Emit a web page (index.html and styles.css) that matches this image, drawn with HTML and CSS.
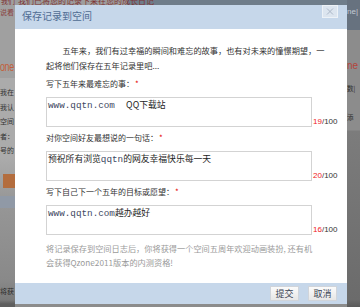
FILE: index.html
```html
<!DOCTYPE html>
<html lang="zh-CN">
<head>
<meta charset="utf-8">
<title>保存记录到空间</title>
<link rel="stylesheet" href="styles.css">
</head>
<body>
<div class="page">
  <div class="side side-left">
    <div class="lt-red1">我们</div>
    <div class="lt-red2">说看</div>
    <div class="brand-left">one</div>
    <ul class="lt-lines">
      <li>我在</li>
      <li>我认</li>
      <li>空间</li>
      <li>者：</li>
      <li>号的</li>
    </ul>
    <div class="lt-orange"></div>
    <div class="lt-blue"></div>
    <div class="lt-bottom">将获</div>
  </div>
  <div class="middle">
    <div class="mid-top"><span class="mid-red">我们已将您的记录下来在您的成长日记</span></div>
  </div>
  <div class="side side-right">
    <div class="rt-head">ne|</div>
    <div class="rt-brand">ne</div>
    <div class="rt-line rt-l1">数|</div>
    <div class="rt-line rt-l2">添</div>
  </div>
</div>

<div class="dialog">
  <div class="dlg-title">
    <span class="dlg-name">保存记录到空间</span>
    <button class="dlg-close" type="button" aria-label="关闭">
      <svg width="8" height="7" viewBox="0 0 8 7"><path d="M1 0.5L7 6.5M7 0.5L1 6.5" stroke="#aab6c6" stroke-width="1" fill="none"/></svg>
    </button>
  </div>
  <div class="dlg-body">
    <p class="intro">五年来，我们有过幸福的瞬间和难忘的故事，也有对未来的憧憬期望，一<wbr>起将他们保存在五年记录里吧...</p>
    <div class="field">
      <label class="lbl">写下五年来最难忘的事：<em>*</em></label>
      <div class="row">
        <div class="ta" role="textbox" aria-multiline="true"><span class="mono">www.qqtn.com  </span>QQ下载站</div>
        <span class="count"><b>19</b>/100</span>
      </div>
    </div>
    <div class="field">
      <label class="lbl">对你空间好友最想说的一句话：<em>*</em></label>
      <div class="row">
        <div class="ta" role="textbox" aria-multiline="true">预祝所有浏览<span class="mono">qqtn</span>的网友幸福快乐每一天</div>
        <span class="count"><b>20</b>/100</span>
      </div>
    </div>
    <div class="field">
      <label class="lbl">写下自己下一个五年的目标或愿望：<em>*</em></label>
      <div class="row">
        <div class="ta" role="textbox" aria-multiline="true"><span class="mono">www.qqtn.com</span>越办越好</div>
        <span class="count"><b>16</b>/100</span>
      </div>
    </div>
    <p class="note">将记录保存到空间日志后，你将获得一个空间五周年欢迎动画装扮, 还有机会获得Qzone2011版本的内测资格!</p>
  </div>
  <div class="dlg-foot">
    <button class="btn" type="button">提交</button>
    <button class="btn" type="button">取消</button>
  </div>
</div>
</body>
</html>
```

FILE: styles.css
```css
* { box-sizing: border-box; margin: 0; padding: 0; }
html, body { width: 360px; height: 307px; overflow: hidden; }
body {
  position: relative;
  background: #8c8c8c;
  font-family: "Noto Sans CJK SC", "Liberation Sans", sans-serif;
  color: #333;
}

/* background page (dimmed) */
.page {
  display: grid;
  grid-template-columns: 15px 1fr 13px;
  height: 307px;
}
.side { overflow: hidden; white-space: nowrap; }
.side-left {
  background: linear-gradient(to bottom, #a0a0a0 0, #a0a0a0 78px, #ababab 78px, #ababab 158px, #979797 200px, #898989 280px, #7a7a7a 300px, #5e5e5e 304px);
  display: flex;
  flex-direction: column;
}
.lt-red1 { font-size: 7px; line-height: 8px; margin-top: -3px; color: #7e3232; padding-left: 1px; }
.lt-red2 { font-size: 7px; line-height: 10px; margin-top: 2px; color: #8a4040; }
.brand-left {
  margin-top: 42px;
  height: 14px;
  font-family: "Liberation Sans", sans-serif;
  font-size: 9px;
  line-height: 10px;
  letter-spacing: -0.4px;
  color: #c2603b;
  transform: scale(1, 1.5);
  transform-origin: left top;
}
.lt-lines { list-style: none; margin-top: 12px; font-size: 7px; line-height: 14.5px; color: #333; }
.lt-orange { margin: 16px 0 0 3px; height: 14px; background: #b36d3e; }
.lt-blue { margin-top: 8px; height: 12px; background: #9099a6; }
.lt-bottom { margin-top: 78px; font-size: 7px; line-height: 10px; color: #2c2c2c; }

.middle { overflow: hidden; }
.mid-top {
  height: 5px;
  overflow: hidden;
  background: linear-gradient(to right, #9d9d9d 0, #9d9d9d 112px, #6f7d8a 112px);
}
.mid-red { display: block; font-size: 8px; line-height: 8px; margin-top: -3px; padding-left: 3px; color: #7e3232; }

.side-right {
  background: linear-gradient(to bottom, #67727f 0, #67727f 30px, #8c8c8c 30px, #8c8c8c 130px, #7c7c7c 131px, #6b6b6b 300px, #5a5a5a 307px);
}
.rt-head { height: 30px; padding-top: 7px; font-family: "Liberation Sans", sans-serif; font-size: 8px; line-height: 10px; color: #c3cbd4; }
.rt-brand { margin-top: 30px; font-family: "Liberation Sans", sans-serif; font-size: 10px; line-height: 12px; color: #b4443a; }
.rt-line { font-size: 6.5px; line-height: 10px; color: #2e2e2e; }
.rt-l1 { margin-top: 11px; }
.rt-l2 { margin-top: 19px; }

/* dialog (modal over the page) */
.dialog {
  position: absolute;
  left: 15px;
  top: 5px;
  width: 332px;
  height: 299px;
  display: flex;
  flex-direction: column;
  background: #fff;
}
.dlg-title {
  height: 24px;
  flex: none;
  display: flex;
  align-items: flex-start;
  justify-content: space-between;
  background: #c6d7ea;
  padding-left: 7px;
  padding-right: 9px;
}
.dlg-name {
  font-size: 10px;
  line-height: 22px;
  color: #506c93;
}
.dlg-close {
  width: 16px;
  height: 13px;
  border: 1px solid #edf2f7;
  background: #dce5ef;
  display: flex;
  align-items: center;
  justify-content: center;
}

.dlg-body {
  flex: 1;
  padding: 14px 16px 0 31px;
}
.intro {
  font-size: 8.2px;
  line-height: 15px;
  text-indent: 2em;
  line-break: anywhere;
}
.field { margin-top: 4px; }
.lbl {
  display: block;
  font-size: 8px;
  line-height: 14px;
}
.lbl em { font-style: normal; color: #e60000; margin-left: 1px; }
.row {
  display: flex;
  align-items: flex-end;
  margin-top: 6px;
}
.ta {
  width: 266px;
  height: 30px;
  flex: none;
  border: 1px solid #d3d3d3;
  padding: 1px 1px;
  overflow: hidden;
  font-family: "Noto Sans CJK SC", sans-serif;
  font-size: 8.8px;
  line-height: 11px;
  color: #1e1e1e;
  background: #fff;
  white-space: pre-wrap;
}
.mono {
  font-family: "Liberation Mono", monospace;
  font-size: 9.3px;
  color: #3e4862;
}
.count {
  font-family: "Liberation Sans", sans-serif;
  font-size: 8px;
  line-height: 11px;
  color: #333;
  padding-left: 1px;
}
.count b { font-weight: normal; color: #f02020; }
.note {
  width: 272px;
  margin-top: 6px;
  font-size: 8.2px;
  line-height: 14px;
  color: #9a9a9a;
  word-break: break-all;
}

.dlg-foot {
  height: 21px;
  flex: none;
  background: #c6d7ea;
  display: flex;
  justify-content: flex-end;
  align-items: center;
  gap: 9px;
  padding-right: 10px;
}
.btn {
  width: 29px;
  height: 15px;
  border: 1px solid #d0d4da;
  background: linear-gradient(#fbfbfb, #e6e6e6);
  font-family: "Noto Sans CJK SC", sans-serif;
  font-size: 9px;
  line-height: 13px;
  color: #3a4352;
}
```
